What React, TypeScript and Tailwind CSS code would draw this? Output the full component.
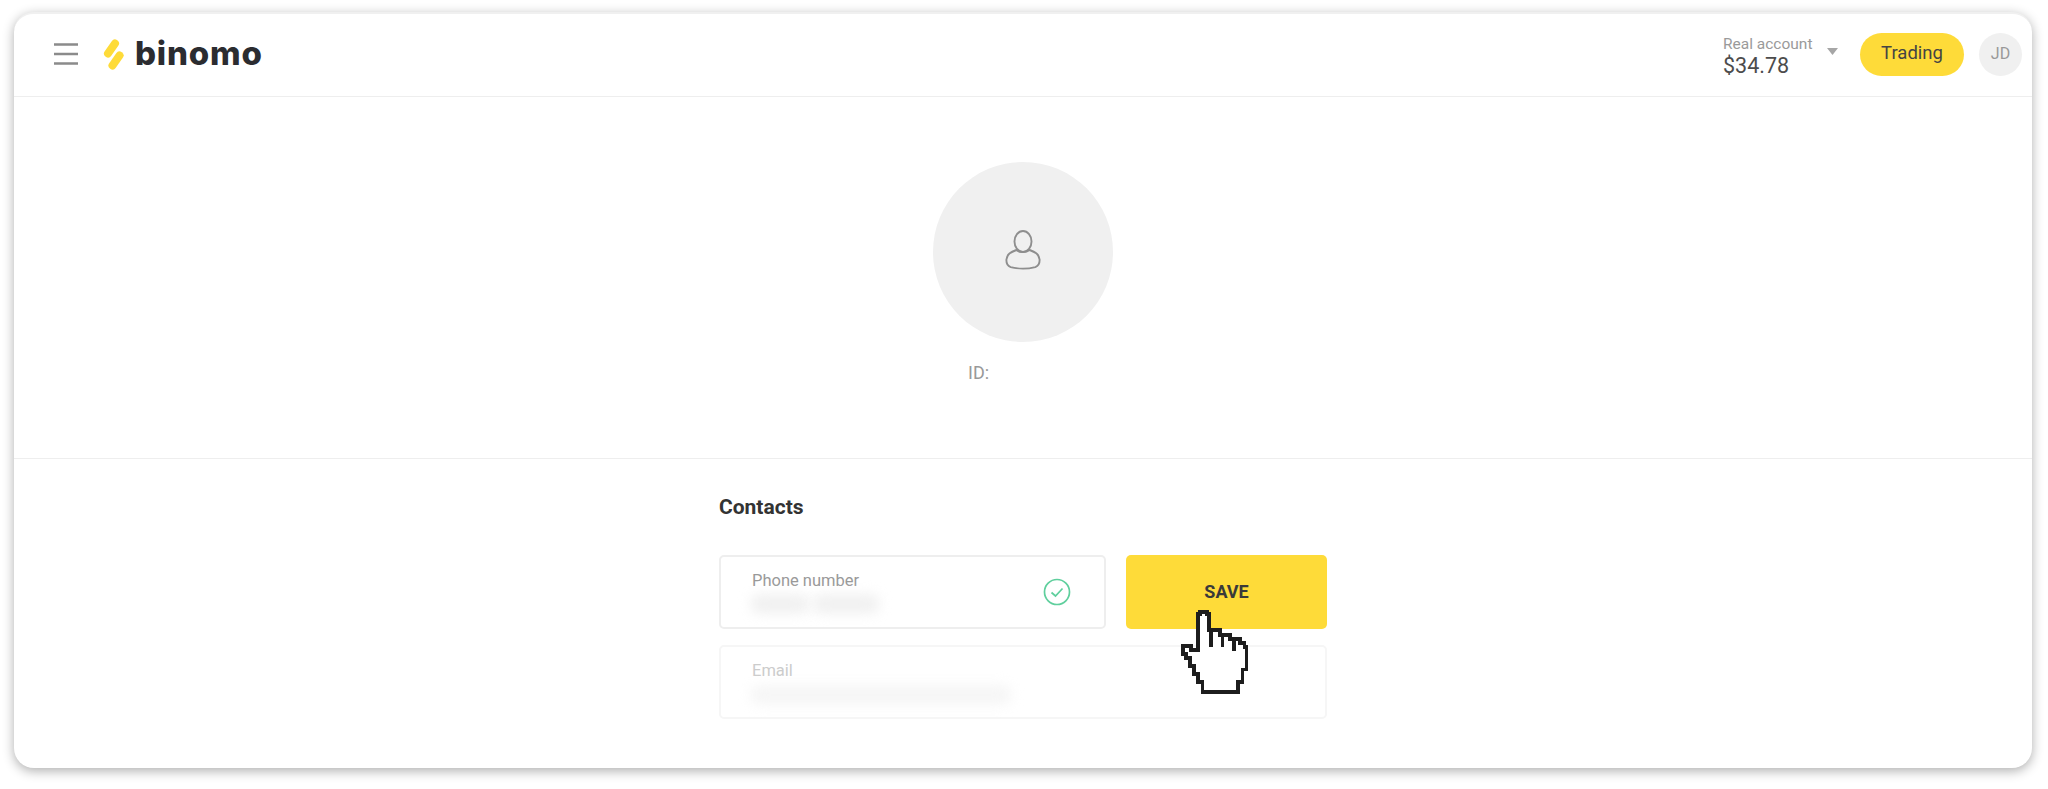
export default function App() {
  return (
    <div className="w-[2048px] h-[789px] bg-white pt-[12px] pl-[14px] pr-[16px] pb-[21px] overflow-hidden font-['Roboto',sans-serif]">
      <div className="relative w-full h-full bg-white rounded-[20px] shadow-[0_3px_12px_rgba(0,0,0,0.32)] border-t-2 border-[#f0f0f0]">
        <header className="h-[83px] border-b border-[#eeeeee] flex items-center pl-[40px] pr-[10px] pb-[2px]">
          <svg width="24" height="22" viewBox="0 0 24 22" className="mr-[25px]">
            <path d="M0 1.5H24M0 11H24M0 20.5H24" stroke="#8b8b8b" strokeWidth="2.4" />
          </svg>
          <svg width="21" height="31" viewBox="0 0 21 31" className="mr-[11px]">
            <path d="M12 4.500L5 14.500" stroke="#fedb39" strokeWidth="8" strokeLinecap="round" />
            <path d="M16.500 16.500L9.500 26.500" stroke="#fedb39" strokeWidth="8" strokeLinecap="round" />
          </svg>
          <span className="font-['Inter',sans-serif] font-extrabold text-[33px] leading-none text-[#2b2c30] tracking-[0.8px] -mt-[2px]">binomo</span>
          <div className="ml-auto flex flex-col w-[100px] pt-[4px]">
            <span className="text-[15.500px] leading-[18px] text-[#9a9a9a]">Real account</span>
            <span className="text-[21.500px] leading-[25px] text-[#4c4c4c]">$34.78</span>
          </div>
          <svg width="11" height="7" viewBox="0 0 11 7" className="mr-[22px] -mt-[5px] ml-[4px]">
            <path d="M0 0H11L5.5 7Z" fill="#a6a6a6" />
          </svg>
          <div className="w-[104px] h-[43px] rounded-full bg-[#fedb39] flex items-center justify-center text-[18.500px] text-[#444444]">Trading</div>
          <div className="ml-[15px] w-[43px] h-[43px] rounded-full bg-[#f0f0f0] flex items-center justify-center text-[16px] text-[#999999]">JD</div>
        </header>
        <section className="h-[362px] border-b border-[#eeeeee] flex flex-col items-center pt-[65px]">
          <div className="w-[180px] h-[180px] rounded-full bg-[#f0f0f0] flex items-center justify-center pb-[4px]">
            <svg width="36" height="40" viewBox="0 0 38 42" fill="none" stroke="#8e8e8e" strokeWidth="2">
              <ellipse cx="19" cy="12" rx="9" ry="11" />
              <path d="M12 21C7 23 2 25 1.5 31C1.2 36 3 38 6 39C14 41 24 41 32 39C35 38 36.800 36 36.500 31C36 25 31 23 26 21C22 24 16 24 12 21Z" />
            </svg>
          </div>
          <div className="w-[180px] mt-[19px] pl-[35px] text-[18px] leading-[24px] text-[#999999]">ID:</div>
        </section>
        <section className="w-[608px] mx-auto pt-[35px]">
          <h2 className="text-[21px] leading-[26px] font-bold text-[#333333]">Contacts</h2>
          <div className="mt-[35px] flex gap-[20px]">
            <div className="w-[387px] h-[74px] rounded-[5px] border-2 border-[#eeeeee] flex items-center justify-between pl-[31px] pr-[33px]">
              <div className="flex flex-col pt-[2px]">
                <span className="text-[16.500px] leading-[18px] text-[#999999]">Phone number</span>
                <div className="mt-[4px] flex gap-[2px] -ml-[2px]">
                  <div className="w-[60px] h-[20px] bg-[#f1f1f1] rounded-full blur-[6px]" />
                  <div className="w-[68px] h-[20px] bg-[#f1f1f1] rounded-full blur-[6px]" />
                </div>
              </div>
              <svg width="28" height="28" viewBox="0 0 28 28" fill="none" stroke="#5fcf9d" strokeWidth="1.700">
                <circle cx="14" cy="14" r="12.500" />
                <path d="M8.500 14.500L12.500 18L19.500 10.500" />
              </svg>
            </div>
            <button className="w-[201px] h-[74px] rounded-[5px] bg-[#fedb39] text-[18px] font-bold text-[#3a3a3a] pb-[2px]">SAVE</button>
          </div>
          <div className="mt-[16px] w-[608px] h-[74px] rounded-[5px] border-2 border-[#f6f6f6] flex flex-col justify-center pl-[31px] pt-[3px]">
            <span className="text-[16.500px] leading-[18px] text-[#cccccc]">Email</span>
            <div className="mt-[5px] -ml-[2px] w-[262px] h-[20px] bg-[#f6f6f6] rounded-full blur-[6px]" />
          </div>
        </section>
        <svg width="69" height="84" viewBox="0 0 200 252" preserveAspectRatio="none" fill="#ffffff" stroke="#1d1d1d" strokeWidth="11" shapeRendering="crispEdges" className="absolute left-[1166px] top-[596px]">
          <path d="M53 12H59V6H79V12H85V60H115V74H145V86H175V98H187V110H193V178H181V216H169V246H65V216H53V192H41V168H29V144H17V132H9V108H33V120H53Z" />
          <path d="M90 60V112M123 74V112M157 86V122" fill="none" />
        </svg>
      </div>
    </div>
  );
}
